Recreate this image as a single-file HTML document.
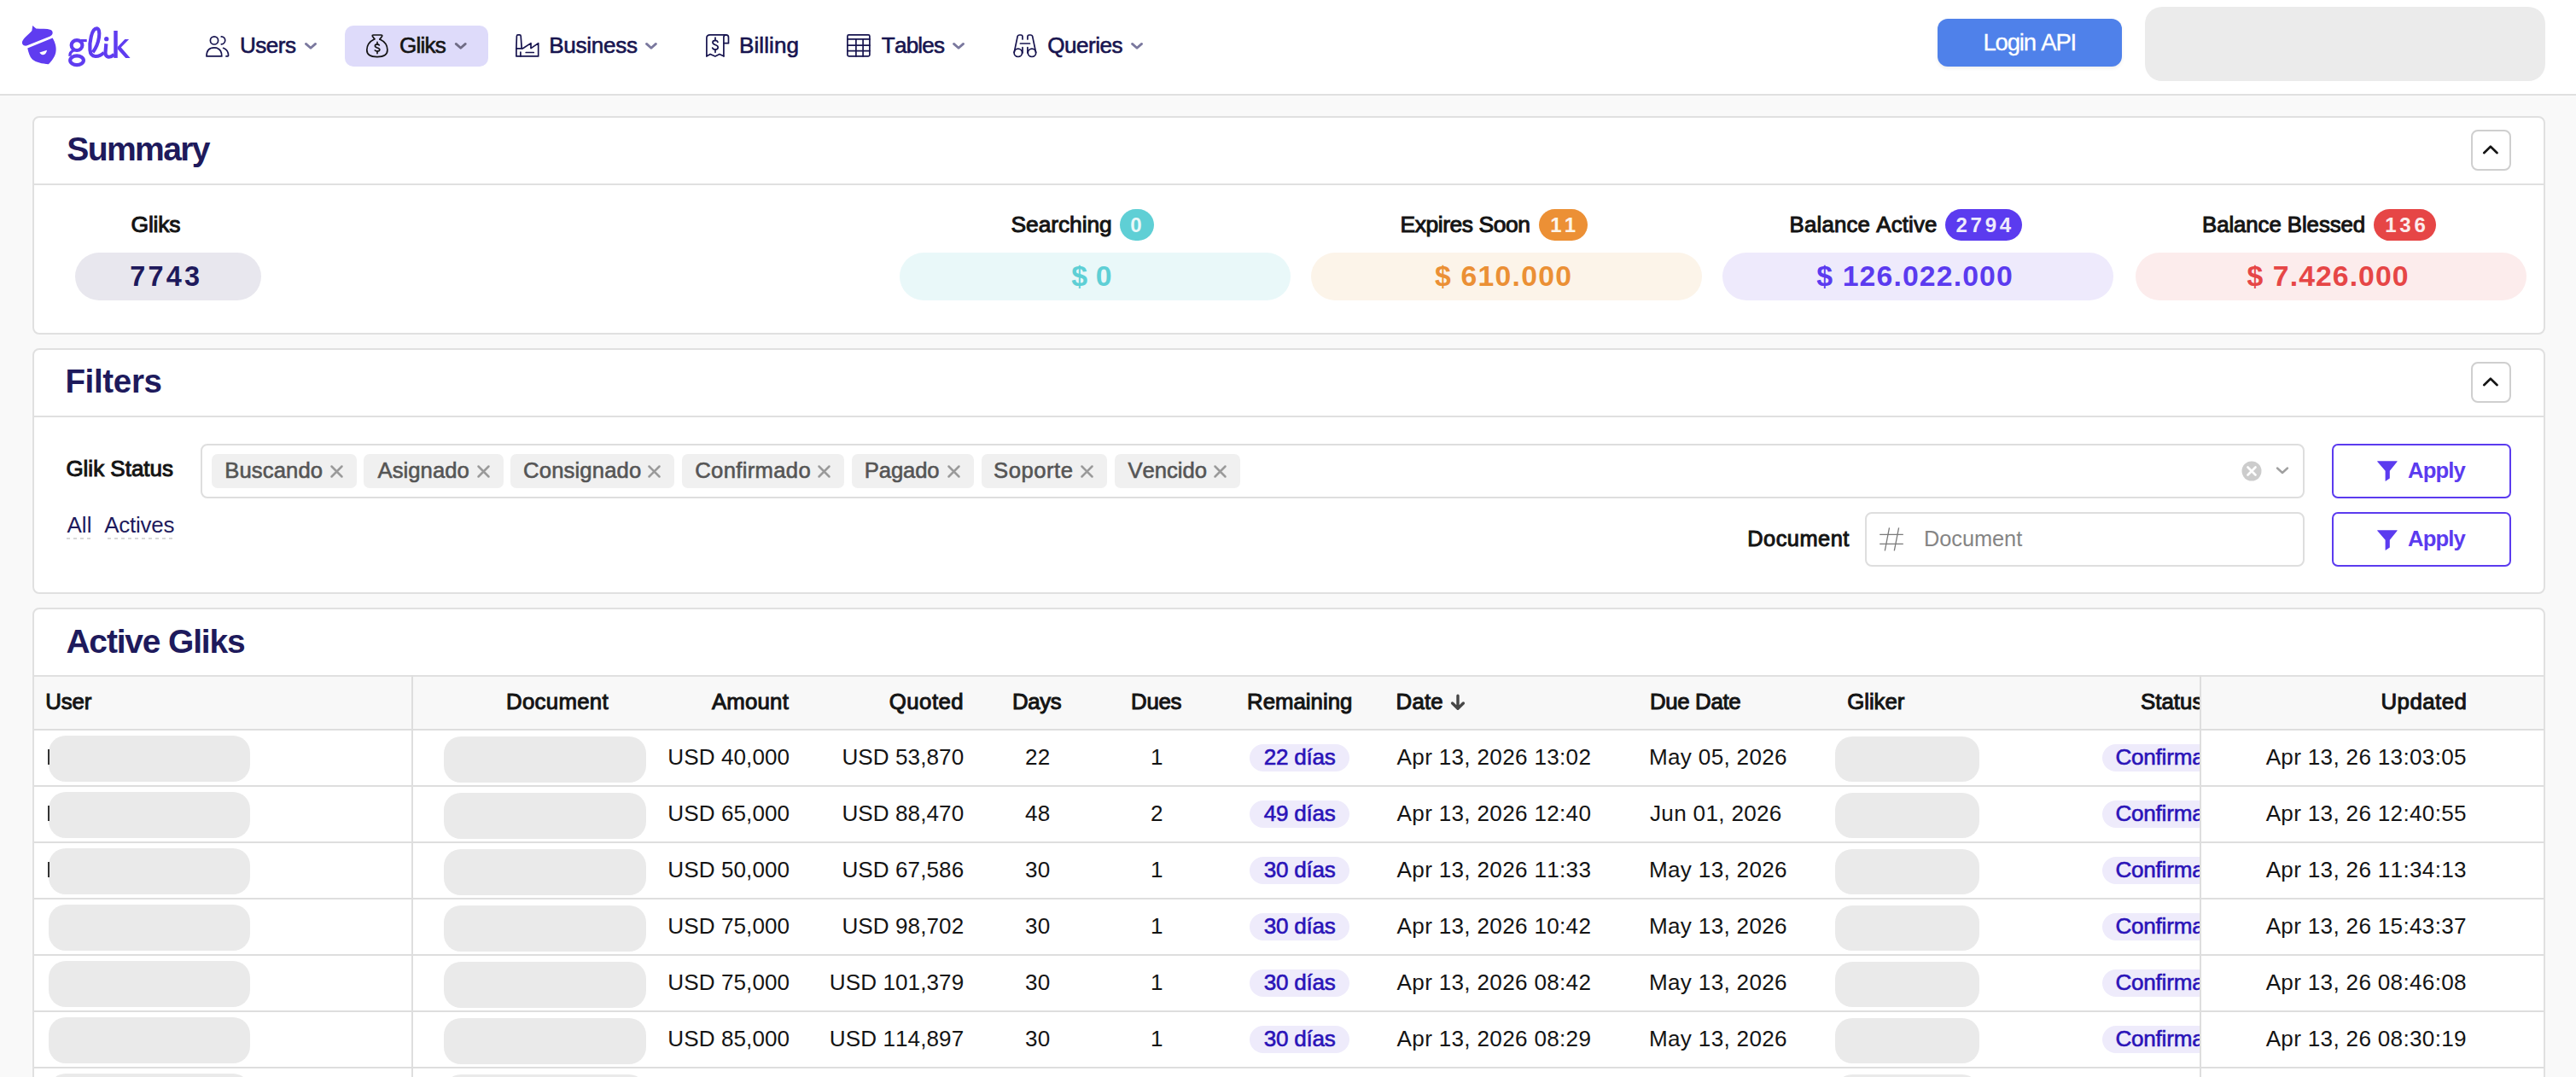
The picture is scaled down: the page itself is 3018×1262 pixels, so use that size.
<!DOCTYPE html>
<html><head><meta charset="utf-8"><title>Gliks</title>
<style>
html,body{margin:0;padding:0}
body{width:3018px;height:1262px;position:relative;overflow:hidden;background:#f9f9f9;font-family:"Liberation Sans",sans-serif}
.a{position:absolute;box-sizing:border-box}
.t{position:absolute;white-space:pre;font-family:"Liberation Sans",sans-serif}
svg{position:absolute;overflow:visible}
.ph{position:absolute;background:#eaeaea;border-radius:20px}
.hl{position:absolute;height:2px;background:#dedede}
.vl{position:absolute;width:2px;background:#dedede}
.dp{position:absolute;background:#eeebfb;border-radius:16px;height:32px}
</style></head><body>
<div class="a" style="left:0;top:0;width:3018px;height:112px;background:#fff;border-bottom:2px solid #e0e0e0"></div>
<div class="a" style="left:404px;top:30px;width:168px;height:48px;border-radius:10px;background:#dedbfa"></div>
<div class="a" style="left:2270px;top:22px;width:216px;height:56px;border-radius:12px;background:#4f81ea;box-shadow:0 2px 4px rgba(0,0,0,0.07)"></div>
<div class="a" style="left:2513px;top:8px;width:469px;height:87px;border-radius:20px;background:#ebebeb"></div>
<svg style="left:20px;top:20px" width="160" height="80" viewBox="0 0 2154 1077">
<g fill="#5f3cf0">
<path d="M245 135 L300 182 C380 186 470 180 532 202 C578 228 566 282 522 302 L152 452 C100 462 68 420 84 380 C110 320 190 268 234 214 Z"/>
<path d="M165 490 L560 330 C602 402 626 482 610 560 C592 640 542 700 495 745 C400 732 300 720 240 666 C200 622 180 560 165 490 Z"/>
<rect x="1000" y="350" width="100" height="42"/>
<circle cx="1410" cy="345" r="36"/>
<rect x="1525" y="215" width="60" height="430"/>
<path d="M1585 470 L1700 350 L1765 350 L1640 478 L1785 645 L1712 645 L1585 505 Z"/>
</g>
<path d="M355 560 L472 520 C465 560 445 590 410 595 C385 597 365 580 355 560 Z" fill="#fff"/>
<g fill="none" stroke="#5f3cf0" stroke-width="56">
<ellipse cx="943" cy="445" rx="86" ry="80"/>
<ellipse cx="943" cy="683" rx="106" ry="72"/>
<path d="M1195 555 C1300 420 1330 180 1255 180 C1175 180 1140 400 1150 520 C1160 650 1290 640 1370 560"/>
<path d="M1405 420 L1393 560 C1390 640 1470 650 1530 590"/>
</g>
<path d="M905 515 Q825 555 835 615" fill="none" stroke="#5f3cf0" stroke-width="46"/>
</svg>
<svg style="left:236px;top:34px" width="40" height="40" viewBox="0 0 40 40"><g fill="none" stroke="#17144f" stroke-width="1.7" stroke-linecap="round" stroke-linejoin="round"><circle cx="15" cy="13.4" r="4.6"/><path d="M6 31.9 H23.8 Q23.8 21.9 14.9 21.9 Q6 21.9 6 31.9 Z"/><path d="M23.3 8.9 A4.45 4.45 0 0 1 23.3 17.8"/><path d="M25.6 22.3 Q31.6 24.6 31.6 31 Q31.6 31.9 30.8 31.9 H29"/></g></svg>
<svg style="left:422px;top:34px" width="40" height="40" viewBox="0 0 40 40"><g fill="none" stroke="#141414" stroke-width="1.7" stroke-linecap="round" stroke-linejoin="round"><path d="M16.8 11.7 L14.4 8.4 Q13.9 7 15.5 7 H24.5 Q26.1 7 25.6 8.4 L23 12"/><path d="M16.8 11.7 C10 15 7.8 20 7.8 24.6 C7.8 30 12 32.7 19.9 32.7 C27.8 32.7 31.9 30 31.9 24.6 C31.9 20 29.5 15 23 12"/><path d="M22.3 18.9 Q21.5 17.8 20 17.8 Q17.4 17.8 17.4 19.8 Q17.4 21.3 20 22 Q22.8 22.7 22.8 24.3 Q22.8 26 20 26 Q18.3 26 17.3 25"/><path d="M20 15.4 V17.8 M20 26 V28.6"/></g></svg>
<svg style="left:598px;top:34px" width="40" height="40" viewBox="0 0 40 40"><g fill="none" stroke="#17144f" stroke-width="1.7" stroke-linecap="round" stroke-linejoin="round"><path d="M6.9 31.9 H32.7 V16.6 L24 22.6 V16.6 L14.5 22.8 H6.9 Z"/><path d="M6.9 22.8 L7.4 8.2 Q7.5 6.9 8.8 6.9 H10.8 Q12.1 6.9 12.2 8.2 L13.2 22.6"/><path d="M11.9 27 V31.9 M18.2 27.5 H27.3"/></g></svg>
<svg style="left:821px;top:34px" width="40" height="40" viewBox="0 0 40 40"><g fill="none" stroke="#17144f" stroke-width="1.7" stroke-linecap="round" stroke-linejoin="round"><path d="M6.9 31.8 V10.6 Q6.9 6.9 10.9 6.9 H29.6 Q32.5 6.9 32.5 9.8 V16.7 H26.9"/><path d="M26.9 31.8 V9.6 Q26.9 6.9 29.6 6.9"/><path d="M6.9 31.8 L11.2 29.4 L16.9 32 L21.9 29.4 L26.9 31.8"/><path d="M20 15.3 Q19.2 13.4 17 13.4 Q14 13.4 14 15.8 Q14 17.6 17 18.5 Q20.2 19.4 20.2 21.6 Q20.2 24.1 17 24.1 Q14.5 24.1 13.7 22.1"/><path d="M17 10.2 V13.4 M17 24.1 V27.3"/></g></svg>
<svg style="left:986px;top:34px" width="40" height="40" viewBox="0 0 40 40"><g fill="none" stroke="#17144f" stroke-width="1.7" stroke-linecap="round" stroke-linejoin="round"><rect x="6.9" y="6.9" width="26" height="25" rx="1.6"/><path d="M6.9 11.9 H32.9 M6.9 19.2 H32.9 M6.9 25.6 H32.9 M16.9 11.9 V31.9 M25.1 11.9 V31.9"/></g></svg>
<svg style="left:1180px;top:34px" width="40" height="40" viewBox="0 0 40 40"><g fill="none" stroke="#17144f" stroke-width="1.7" stroke-linecap="round" stroke-linejoin="round"><circle cx="12.8" cy="27.8" r="4.7"/><circle cx="29" cy="27.8" r="4.7"/><path d="M8.2 27.5 L12.2 8.3 Q12.8 7 14.3 7 H16 Q18 7 18 9.2 V11.9 M18 21.5 V28"/><path d="M33.6 27.5 L29.6 8.3 Q29 7 27.5 7 H25.8 Q23.9 7 23.9 9.2 V11.9 M23.9 21.5 V28"/><path d="M15.4 17 H26.5"/></g></svg>
<svg style="left:0;top:0" width="1" height="1"><path d="M358.4 51.400000000000006 L364.0 56.3 L369.6 51.400000000000006" fill="none" stroke="#7a789e" stroke-width="2.8" stroke-linecap="round" stroke-linejoin="round"/></svg>
<svg style="left:0;top:0" width="1" height="1"><path d="M534.2 51.400000000000006 L539.75 56.3 L545.3 51.400000000000006" fill="none" stroke="#6f6c85" stroke-width="2.8" stroke-linecap="round" stroke-linejoin="round"/></svg>
<svg style="left:0;top:0" width="1" height="1"><path d="M757.5 51.400000000000006 L762.95 56.3 L768.4 51.400000000000006" fill="none" stroke="#7a789e" stroke-width="2.8" stroke-linecap="round" stroke-linejoin="round"/></svg>
<svg style="left:0;top:0" width="1" height="1"><path d="M1117.5 51.400000000000006 L1123.05 56.3 L1128.6 51.400000000000006" fill="none" stroke="#7a789e" stroke-width="2.8" stroke-linecap="round" stroke-linejoin="round"/></svg>
<svg style="left:0;top:0" width="1" height="1"><path d="M1326.5 51.400000000000006 L1332.05 56.3 L1337.6 51.400000000000006" fill="none" stroke="#7a789e" stroke-width="2.8" stroke-linecap="round" stroke-linejoin="round"/></svg>
<div class="a" style="left:38px;top:136px;width:2944px;height:256px;background:#fff;border:2px solid #e0e0e0;border-radius:8px"></div>
<div class="hl" style="left:40px;top:215px;width:2940px;background:#e0e0e0"></div>
<div class="a" style="left:2894.5px;top:152px;width:47px;height:47.5px;border:2px solid #cfcfcf;border-radius:8px;background:#fff"></div>
<svg style="left:2895px;top:152px" width="46" height="47" viewBox="0 0 46 47"><path d="M15.2 27.2 L22.9 19.7 L30.6 27.2" fill="none" stroke="#141414" stroke-width="2.6" stroke-linecap="round" stroke-linejoin="round"/></svg>
<div class="a" style="left:38px;top:408px;width:2944px;height:288px;background:#fff;border:2px solid #e0e0e0;border-radius:8px"></div>
<div class="hl" style="left:40px;top:487px;width:2940px;background:#e0e0e0"></div>
<div class="a" style="left:2894.5px;top:424px;width:47px;height:47.5px;border:2px solid #cfcfcf;border-radius:8px;background:#fff"></div>
<svg style="left:2895px;top:424px" width="46" height="47" viewBox="0 0 46 47"><path d="M15.2 27.2 L22.9 19.7 L30.6 27.2" fill="none" stroke="#141414" stroke-width="2.6" stroke-linecap="round" stroke-linejoin="round"/></svg>
<div class="a" style="left:38px;top:712px;width:2944px;height:700px;background:#fff;border:2px solid #e0e0e0;border-radius:8px"></div>
<div class="hl" style="left:40px;top:791px;width:2940px;background:#e0e0e0"></div>
<div class="a" style="left:88px;top:296px;width:218px;height:56px;border-radius:28px;background:#e8e7ee"></div>
<div class="a" style="left:1054px;top:296px;width:458px;height:56px;border-radius:28px;background:#e9f8f9"></div>
<div class="a" style="left:1536px;top:296px;width:458px;height:56px;border-radius:28px;background:#fcf4e9"></div>
<div class="a" style="left:2018px;top:296px;width:458px;height:56px;border-radius:28px;background:#eeeafc"></div>
<div class="a" style="left:2502px;top:296px;width:458px;height:56px;border-radius:28px;background:#fcecec"></div>
<div class="a" style="left:1311.7px;top:245px;width:40.8px;height:37px;border-radius:18.5px;background:#5fcfd5"></div>
<div class="a" style="left:1802.8px;top:245px;width:57.1px;height:37px;border-radius:18.5px;background:#ec9035"></div>
<div class="a" style="left:2279px;top:245px;width:89.8px;height:37px;border-radius:18.5px;background:#5b3bef"></div>
<div class="a" style="left:2781.4px;top:245px;width:72.4px;height:37px;border-radius:18.5px;background:#e64646"></div>
<div class="a" style="left:235px;top:520px;width:2464.5px;height:64px;border:2px solid #dedede;border-radius:8px;background:#fff"></div>
<div class="a" style="left:248.1px;top:532px;width:169.7px;height:40px;border-radius:7px;background:#f0f0f0"></div>
<svg style="left:386.8px;top:545px" width="15" height="15" viewBox="0 0 15 15"><path d="M1.5 1.5 L13.5 13.5 M13.5 1.5 L1.5 13.5" stroke="#9a9a9a" stroke-width="2.5" stroke-linecap="round"/></svg>
<div class="a" style="left:426.1px;top:532px;width:163.9px;height:40px;border-radius:7px;background:#f0f0f0"></div>
<svg style="left:559.0px;top:545px" width="15" height="15" viewBox="0 0 15 15"><path d="M1.5 1.5 L13.5 13.5 M13.5 1.5 L1.5 13.5" stroke="#9a9a9a" stroke-width="2.5" stroke-linecap="round"/></svg>
<div class="a" style="left:598.2px;top:532px;width:192.2px;height:40px;border-radius:7px;background:#f0f0f0"></div>
<svg style="left:759.4px;top:545px" width="15" height="15" viewBox="0 0 15 15"><path d="M1.5 1.5 L13.5 13.5 M13.5 1.5 L1.5 13.5" stroke="#9a9a9a" stroke-width="2.5" stroke-linecap="round"/></svg>
<div class="a" style="left:798.9px;top:532px;width:190.2px;height:40px;border-radius:7px;background:#f0f0f0"></div>
<svg style="left:958.1px;top:545px" width="15" height="15" viewBox="0 0 15 15"><path d="M1.5 1.5 L13.5 13.5 M13.5 1.5 L1.5 13.5" stroke="#9a9a9a" stroke-width="2.5" stroke-linecap="round"/></svg>
<div class="a" style="left:998px;top:532px;width:142.5px;height:40px;border-radius:7px;background:#f0f0f0"></div>
<svg style="left:1109.5px;top:545px" width="15" height="15" viewBox="0 0 15 15"><path d="M1.5 1.5 L13.5 13.5 M13.5 1.5 L1.5 13.5" stroke="#9a9a9a" stroke-width="2.5" stroke-linecap="round"/></svg>
<div class="a" style="left:1149.5px;top:532px;width:147.5px;height:40px;border-radius:7px;background:#f0f0f0"></div>
<svg style="left:1266.0px;top:545px" width="15" height="15" viewBox="0 0 15 15"><path d="M1.5 1.5 L13.5 13.5 M13.5 1.5 L1.5 13.5" stroke="#9a9a9a" stroke-width="2.5" stroke-linecap="round"/></svg>
<div class="a" style="left:1305.5px;top:532px;width:147.9px;height:40px;border-radius:7px;background:#f0f0f0"></div>
<svg style="left:1422.4px;top:545px" width="15" height="15" viewBox="0 0 15 15"><path d="M1.5 1.5 L13.5 13.5 M13.5 1.5 L1.5 13.5" stroke="#9a9a9a" stroke-width="2.5" stroke-linecap="round"/></svg>
<svg style="left:2626px;top:540px" width="24" height="24" viewBox="0 0 24 24"><circle cx="12" cy="12" r="11.5" fill="#cccccc"/><path d="M7.5 7.5 L16.5 16.5 M16.5 7.5 L7.5 16.5" stroke="#fff" stroke-width="2.6" stroke-linecap="round"/></svg>
<svg style="left:2666px;top:546px" width="16" height="11" viewBox="0 0 16 11"><path d="M2 2.5 L8 8 L14 2.5" fill="none" stroke="#a0a0a0" stroke-width="2.4" stroke-linecap="round" stroke-linejoin="round"/></svg>
<div class="a" style="left:2731.8px;top:520px;width:210.4px;height:64px;border:2.4px solid #5b3bef;border-radius:7px;background:#fff"></div>
<svg style="left:2785px;top:540.2px" width="25" height="25" viewBox="0 0 25 25"><path d="M0.6 0.3 H23.2 Q24 0.3 23.5 1 L14.8 11.8 V20.6 L9.6 24 V11.8 L0.3 1 Q-0.2 0.3 0.6 0.3 Z" fill="#5b3bef"/></svg>
<div class="a" style="left:2731.8px;top:600.3px;width:210.4px;height:64px;border:2.4px solid #5b3bef;border-radius:7px;background:#fff"></div>
<svg style="left:2785px;top:620.5px" width="25" height="25" viewBox="0 0 25 25"><path d="M0.6 0.3 H23.2 Q24 0.3 23.5 1 L14.8 11.8 V20.6 L9.6 24 V11.8 L0.3 1 Q-0.2 0.3 0.6 0.3 Z" fill="#5b3bef"/></svg>
<div class="a" style="left:2184.6px;top:600.3px;width:515px;height:64px;border:2px solid #dedede;border-radius:8px;background:#fff"></div>
<svg style="left:2200px;top:617px" width="32" height="30" viewBox="0 0 32 30"><path d="M13.5 1.4 L8.3 28.3 M24.6 1.4 L19.3 28.3 M2.2 9.4 H29.8 M2.2 20.4 H29.8" stroke="#7a7a7a" stroke-width="1.3" fill="none"/></svg>
<div class="a" style="left:78px;top:630px;width:28px;height:2px;background:repeating-linear-gradient(90deg,#d8d8d8 0 4px,transparent 4px 8px)"></div>
<div class="a" style="left:126px;top:630px;width:76px;height:2px;background:repeating-linear-gradient(90deg,#d8d8d8 0 4px,transparent 4px 8px)"></div>
<div class="a" style="left:40px;top:793px;width:2940px;height:61px;background:#f8f8f8"></div>
<div class="hl" style="left:40px;top:854px;width:2940px"></div>
<div class="hl" style="left:40px;top:920px;width:2940px"></div>
<div class="hl" style="left:40px;top:986px;width:2940px"></div>
<div class="hl" style="left:40px;top:1052px;width:2940px"></div>
<div class="hl" style="left:40px;top:1118px;width:2940px"></div>
<div class="hl" style="left:40px;top:1184px;width:2940px"></div>
<div class="hl" style="left:40px;top:1250px;width:2940px"></div>
<div class="vl" style="left:482px;top:791px;height:480px"></div>
<div class="vl" style="left:2577px;top:791px;height:480px"></div>
<svg style="left:1698px;top:813px" width="20" height="20" viewBox="0 0 20 20"><path d="M10 2.2 V16.8 M3.6 11 L10 17.2 L16.4 11" fill="none" stroke="#474747" stroke-width="3.4" stroke-linecap="round" stroke-linejoin="round"/></svg>
<div class="ph" style="left:57px;top:862px;width:236px;height:54px"></div>
<div class="ph" style="left:520px;top:863px;width:237px;height:54px"></div>
<div class="ph" style="left:2150px;top:863px;width:169px;height:53px"></div>
<div class="dp" style="left:1464px;top:872px;width:117px"></div>
<div class="a" style="left:2440px;top:860px;width:137px;height:56px;overflow:hidden"><div class="dp" style="left:23.2px;top:12px;width:160px"></div><div class="t" style="left:38.40px;top:14.00px;color:#2a13b8;font-weight:400;font-size:26.09px;line-height:1;font-kerning:none;-webkit-text-stroke:0.6px currentColor;letter-spacing:-0.217px">Confirmado</div></div>
<div class="ph" style="left:57px;top:928px;width:236px;height:54px"></div>
<div class="ph" style="left:520px;top:929px;width:237px;height:54px"></div>
<div class="ph" style="left:2150px;top:929px;width:169px;height:53px"></div>
<div class="dp" style="left:1464px;top:938px;width:117px"></div>
<div class="a" style="left:2440px;top:926px;width:137px;height:56px;overflow:hidden"><div class="dp" style="left:23.2px;top:12px;width:160px"></div><div class="t" style="left:38.40px;top:14.00px;color:#2a13b8;font-weight:400;font-size:26.09px;line-height:1;font-kerning:none;-webkit-text-stroke:0.6px currentColor;letter-spacing:-0.217px">Confirmado</div></div>
<div class="ph" style="left:57px;top:994px;width:236px;height:54px"></div>
<div class="ph" style="left:520px;top:995px;width:237px;height:54px"></div>
<div class="ph" style="left:2150px;top:995px;width:169px;height:53px"></div>
<div class="dp" style="left:1464px;top:1004px;width:117px"></div>
<div class="a" style="left:2440px;top:992px;width:137px;height:56px;overflow:hidden"><div class="dp" style="left:23.2px;top:12px;width:160px"></div><div class="t" style="left:38.40px;top:14.00px;color:#2a13b8;font-weight:400;font-size:26.09px;line-height:1;font-kerning:none;-webkit-text-stroke:0.6px currentColor;letter-spacing:-0.217px">Confirmado</div></div>
<div class="ph" style="left:57px;top:1060px;width:236px;height:54px"></div>
<div class="ph" style="left:520px;top:1061px;width:237px;height:54px"></div>
<div class="ph" style="left:2150px;top:1061px;width:169px;height:53px"></div>
<div class="dp" style="left:1464px;top:1070px;width:117px"></div>
<div class="a" style="left:2440px;top:1058px;width:137px;height:56px;overflow:hidden"><div class="dp" style="left:23.2px;top:12px;width:160px"></div><div class="t" style="left:38.40px;top:14.00px;color:#2a13b8;font-weight:400;font-size:26.09px;line-height:1;font-kerning:none;-webkit-text-stroke:0.6px currentColor;letter-spacing:-0.217px">Confirmado</div></div>
<div class="ph" style="left:57px;top:1126px;width:236px;height:54px"></div>
<div class="ph" style="left:520px;top:1127px;width:237px;height:54px"></div>
<div class="ph" style="left:2150px;top:1127px;width:169px;height:53px"></div>
<div class="dp" style="left:1464px;top:1136px;width:117px"></div>
<div class="a" style="left:2440px;top:1124px;width:137px;height:56px;overflow:hidden"><div class="dp" style="left:23.2px;top:12px;width:160px"></div><div class="t" style="left:38.40px;top:14.00px;color:#2a13b8;font-weight:400;font-size:26.09px;line-height:1;font-kerning:none;-webkit-text-stroke:0.6px currentColor;letter-spacing:-0.217px">Confirmado</div></div>
<div class="ph" style="left:57px;top:1192px;width:236px;height:54px"></div>
<div class="ph" style="left:520px;top:1193px;width:237px;height:54px"></div>
<div class="ph" style="left:2150px;top:1193px;width:169px;height:53px"></div>
<div class="dp" style="left:1464px;top:1202px;width:117px"></div>
<div class="a" style="left:2440px;top:1190px;width:137px;height:56px;overflow:hidden"><div class="dp" style="left:23.2px;top:12px;width:160px"></div><div class="t" style="left:38.40px;top:14.00px;color:#2a13b8;font-weight:400;font-size:26.09px;line-height:1;font-kerning:none;-webkit-text-stroke:0.6px currentColor;letter-spacing:-0.217px">Confirmado</div></div>
<div class="ph" style="left:57px;top:1258px;width:236px;height:54px"></div>
<div class="ph" style="left:520px;top:1259px;width:237px;height:54px"></div>
<div class="ph" style="left:2150px;top:1259px;width:169px;height:53px"></div>
<div class="a" style="left:55.5px;top:878px;width:2.2px;height:18px;background:#333"></div>
<div class="a" style="left:55.5px;top:944px;width:2.2px;height:18px;background:#333"></div>
<div class="a" style="left:55.5px;top:1010px;width:2.2px;height:18px;background:#333"></div>
<div class="a" style="left:2440px;top:800px;width:137px;height:50px;overflow:hidden"><div class="t" style="left:68.00px;top:10.00px;color:#141414;font-weight:400;font-size:25.80px;line-height:1;font-kerning:none;-webkit-text-stroke:1.0px currentColor;letter-spacing:0.043px">Status</div></div>
<div class=t style="left:280.90px;top:40.00px;color:#17144f;font-weight:400;font-size:26.09px;line-height:1;font-kerning:none;-webkit-text-stroke:0.6px currentColor;letter-spacing:-0.500px">Users</div>
<div class=t style="left:468.00px;top:40.00px;color:#141414;font-weight:400;font-size:26.09px;line-height:1;font-kerning:none;-webkit-text-stroke:0.6px currentColor;letter-spacing:-0.800px">Gliks</div>
<div class=t style="left:643.20px;top:40.00px;color:#17144f;font-weight:400;font-size:26.09px;line-height:1;font-kerning:none;-webkit-text-stroke:0.6px currentColor;letter-spacing:-0.286px">Business</div>
<div class=t style="left:866.00px;top:40.00px;color:#17144f;font-weight:400;font-size:26.09px;line-height:1;font-kerning:none;-webkit-text-stroke:0.6px currentColor;letter-spacing:0.083px">Billing</div>
<div class=t style="left:1032.80px;top:40.00px;color:#17144f;font-weight:400;font-size:26.09px;line-height:1;font-kerning:none;-webkit-text-stroke:0.6px currentColor;letter-spacing:-0.800px">Tables</div>
<div class=t style="left:1227.20px;top:40.00px;color:#17144f;font-weight:400;font-size:26.09px;line-height:1;font-kerning:none;-webkit-text-stroke:0.6px currentColor;letter-spacing:-0.483px">Queries</div>
<div class=t style="left:2323.40px;top:36.00px;color:#fff;font-weight:400;font-size:27.54px;line-height:1;font-kerning:none;-webkit-text-stroke:0.3px currentColor;letter-spacing:-1.188px">Login API</div>
<div class=t style="left:78.20px;top:155.00px;color:#1e1a5c;font-weight:700;font-size:39.13px;line-height:1;font-kerning:none;letter-spacing:-1.650px">Summary</div>
<div class=t style="left:153.50px;top:250.00px;color:#141414;font-weight:400;font-size:26.52px;line-height:1;font-kerning:none;-webkit-text-stroke:1.0px currentColor;letter-spacing:-0.225px">Gliks</div>
<div class=t style="left:152.30px;top:308.00px;color:#1e1a5c;font-weight:700;font-size:32.46px;line-height:1;font-kerning:none;letter-spacing:3.200px">7743</div>
<div class=t style="left:1184.60px;top:250.00px;color:#141414;font-weight:400;font-size:26.38px;line-height:1;font-kerning:none;-webkit-text-stroke:1.0px currentColor;letter-spacing:-0.075px">Searching</div>
<div class=t style="left:1255.20px;top:307.00px;color:#5ecfd5;font-weight:700;font-size:33.77px;line-height:1;font-kerning:none;letter-spacing:0.200px">$ 0</div>
<div class=t style="left:1640.50px;top:250.00px;color:#141414;font-weight:400;font-size:26.38px;line-height:1;font-kerning:none;-webkit-text-stroke:1.0px currentColor;letter-spacing:-0.409px">Expires Soon</div>
<div class=t style="left:1681.00px;top:307.00px;color:#eb9035;font-weight:700;font-size:33.77px;line-height:1;font-kerning:none;letter-spacing:1.213px">$ 610.000</div>
<div class=t style="left:2096.60px;top:251.00px;color:#141414;font-weight:400;font-size:25.80px;line-height:1;font-kerning:none;-webkit-text-stroke:1.0px currentColor;letter-spacing:0.169px">Balance Active</div>
<div class=t style="left:2128.20px;top:307.00px;color:#5b3bef;font-weight:700;font-size:33.77px;line-height:1;font-kerning:none;letter-spacing:1.142px">$ 126.022.000</div>
<div class=t style="left:2580.00px;top:251.00px;color:#141414;font-weight:400;font-size:25.80px;line-height:1;font-kerning:none;-webkit-text-stroke:1.0px currentColor;letter-spacing:-0.071px">Balance Blessed</div>
<div class=t style="left:2632.60px;top:307.00px;color:#e64646;font-weight:700;font-size:33.77px;line-height:1;font-kerning:none;letter-spacing:1.060px">$ 7.426.000</div>
<div class=t style="left:1324.30px;top:252.00px;color:#e9f8f9;font-weight:700;font-size:24.06px;line-height:1;font-kerning:none;letter-spacing:0.000px">0</div>
<div class=t style="left:1816.20px;top:252.00px;color:#fcf4e9;font-weight:700;font-size:24.06px;line-height:1;font-kerning:none;letter-spacing:3.300px">11</div>
<div class=t style="left:2291.50px;top:252.00px;color:#eeeafc;font-weight:700;font-size:24.06px;line-height:1;font-kerning:none;letter-spacing:3.733px">2794</div>
<div class=t style="left:2794.30px;top:252.00px;color:#fcecec;font-weight:700;font-size:24.06px;line-height:1;font-kerning:none;letter-spacing:3.700px">136</div>
<div class=t style="left:76.40px;top:428.00px;color:#1e1a5c;font-weight:700;font-size:38.55px;line-height:1;font-kerning:none;letter-spacing:-0.350px">Filters</div>
<div class=t style="left:77.40px;top:537.00px;color:#141414;font-weight:400;font-size:25.94px;line-height:1;font-kerning:none;-webkit-text-stroke:1.0px currentColor;letter-spacing:0.020px">Glik Status</div>
<div class=t style="left:263.20px;top:539.00px;color:#555555;font-weight:400;font-size:25.65px;line-height:1;font-kerning:none;-webkit-text-stroke:0.6px currentColor;letter-spacing:0.114px">Buscando</div>
<div class=t style="left:442.60px;top:539.00px;color:#555555;font-weight:400;font-size:25.65px;line-height:1;font-kerning:none;-webkit-text-stroke:0.6px currentColor;letter-spacing:0.029px">Asignado</div>
<div class=t style="left:613.10px;top:539.00px;color:#555555;font-weight:400;font-size:25.65px;line-height:1;font-kerning:none;-webkit-text-stroke:0.6px currentColor;letter-spacing:0.144px">Consignado</div>
<div class=t style="left:814.20px;top:539.00px;color:#555555;font-weight:400;font-size:25.65px;line-height:1;font-kerning:none;-webkit-text-stroke:0.6px currentColor;letter-spacing:0.333px">Confirmado</div>
<div class=t style="left:1012.80px;top:539.00px;color:#555555;font-weight:400;font-size:25.65px;line-height:1;font-kerning:none;-webkit-text-stroke:0.6px currentColor;letter-spacing:-0.120px">Pagado</div>
<div class=t style="left:1164.00px;top:539.00px;color:#555555;font-weight:400;font-size:25.65px;line-height:1;font-kerning:none;-webkit-text-stroke:0.6px currentColor;letter-spacing:0.533px">Soporte</div>
<div class=t style="left:1321.40px;top:539.00px;color:#555555;font-weight:400;font-size:25.65px;line-height:1;font-kerning:none;-webkit-text-stroke:0.6px currentColor;letter-spacing:0.000px">Vencido</div>
<div class=t style="left:78.40px;top:603.00px;color:#1e1a5c;font-weight:400;font-size:25.94px;line-height:1;font-kerning:none;letter-spacing:0.100px">All</div>
<div class=t style="left:122.30px;top:603.00px;color:#1e1a5c;font-weight:400;font-size:25.94px;line-height:1;font-kerning:none;letter-spacing:-0.250px">Actives</div>
<div class=t style="left:2821.00px;top:539.00px;color:#5b3bef;font-weight:700;font-size:25.65px;line-height:1;font-kerning:none;letter-spacing:-0.875px">Apply</div>
<div class=t style="left:2821.00px;top:619.00px;color:#5b3bef;font-weight:700;font-size:25.65px;line-height:1;font-kerning:none;letter-spacing:-0.875px">Apply</div>
<div class=t style="left:2047.20px;top:619.00px;color:#141414;font-weight:400;font-size:25.36px;line-height:1;font-kerning:none;-webkit-text-stroke:1.0px currentColor;letter-spacing:0.514px">Document</div>
<div class=t style="left:2254.00px;top:619.00px;color:#858585;font-weight:400;font-size:25.36px;line-height:1;font-kerning:none;letter-spacing:-0.057px">Document</div>
<div class=t style="left:77.40px;top:732.00px;color:#1e1a5c;font-weight:700;font-size:38.99px;line-height:1;font-kerning:none;letter-spacing:-1.173px">Active Gliks</div>
<div class=t style="left:53.30px;top:810.00px;color:#141414;font-weight:400;font-size:25.80px;line-height:1;font-kerning:none;-webkit-text-stroke:1.0px currentColor;letter-spacing:-0.133px">User</div>
<div class=t style="left:593.00px;top:810.00px;color:#141414;font-weight:400;font-size:25.80px;line-height:1;font-kerning:none;-webkit-text-stroke:1.0px currentColor;letter-spacing:0.300px">Document</div>
<div class=t style="left:833.90px;top:810.00px;color:#141414;font-weight:400;font-size:25.80px;line-height:1;font-kerning:none;-webkit-text-stroke:1.0px currentColor;letter-spacing:0.200px">Amount</div>
<div class=t style="left:1041.70px;top:810.00px;color:#141414;font-weight:400;font-size:25.80px;line-height:1;font-kerning:none;-webkit-text-stroke:1.0px currentColor;letter-spacing:0.480px">Quoted</div>
<div class=t style="left:1186.10px;top:810.00px;color:#141414;font-weight:400;font-size:25.80px;line-height:1;font-kerning:none;-webkit-text-stroke:1.0px currentColor;letter-spacing:-0.433px">Days</div>
<div class=t style="left:1325.00px;top:810.00px;color:#141414;font-weight:400;font-size:25.80px;line-height:1;font-kerning:none;-webkit-text-stroke:1.0px currentColor;letter-spacing:-0.233px">Dues</div>
<div class=t style="left:1461.00px;top:810.00px;color:#141414;font-weight:400;font-size:25.80px;line-height:1;font-kerning:none;-webkit-text-stroke:1.0px currentColor;letter-spacing:0.012px">Remaining</div>
<div class=t style="left:1635.60px;top:810.00px;color:#141414;font-weight:400;font-size:25.80px;line-height:1;font-kerning:none;-webkit-text-stroke:1.0px currentColor;letter-spacing:0.200px">Date</div>
<div class=t style="left:1933.00px;top:810.00px;color:#141414;font-weight:400;font-size:25.80px;line-height:1;font-kerning:none;-webkit-text-stroke:1.0px currentColor;letter-spacing:-0.343px">Due Date</div>
<div class=t style="left:2164.20px;top:810.00px;color:#141414;font-weight:400;font-size:25.80px;line-height:1;font-kerning:none;-webkit-text-stroke:1.0px currentColor;letter-spacing:-0.040px">Gliker</div>
<div class=t style="left:2789.50px;top:810.00px;color:#141414;font-weight:400;font-size:25.80px;line-height:1;font-kerning:none;-webkit-text-stroke:1.0px currentColor;letter-spacing:0.467px">Updated</div>
<div class=t style="left:782.30px;top:874.00px;color:#141414;font-weight:400;font-size:26.09px;line-height:1;font-kerning:none;letter-spacing:0.078px">USD 40,000</div>
<div class=t style="left:986.40px;top:874.00px;color:#141414;font-weight:400;font-size:26.09px;line-height:1;font-kerning:none;letter-spacing:0.078px">USD 53,870</div>
<div class=t style="left:1201.06px;top:874.00px;color:#141414;font-weight:400;font-size:26.09px;line-height:1;font-kerning:none;letter-spacing:0.078px">22</div>
<div class=t style="left:1348.10px;top:874.00px;color:#141414;font-weight:400;font-size:26.09px;line-height:1;font-kerning:none;letter-spacing:0.078px">1</div>
<div class=t style="left:1480.65px;top:874.00px;color:#2a13b8;font-weight:400;font-size:26.09px;line-height:1;font-kerning:none;-webkit-text-stroke:0.6px currentColor;letter-spacing:-0.217px">22 días</div>
<div class=t style="left:1636.60px;top:874.00px;color:#141414;font-weight:400;font-size:26.09px;line-height:1;font-kerning:none;letter-spacing:0.324px">Apr 13, 2026 13:02</div>
<div class=t style="left:1932.00px;top:874.00px;color:#141414;font-weight:400;font-size:26.09px;line-height:1;font-kerning:none;letter-spacing:0.324px">May 05, 2026</div>
<div class=t style="left:2654.67px;top:874.00px;color:#141414;font-weight:400;font-size:26.09px;line-height:1;font-kerning:none;letter-spacing:0.324px">Apr 13, 26 13:03:05</div>
<div class=t style="left:782.30px;top:940.00px;color:#141414;font-weight:400;font-size:26.09px;line-height:1;font-kerning:none;letter-spacing:0.078px">USD 65,000</div>
<div class=t style="left:986.40px;top:940.00px;color:#141414;font-weight:400;font-size:26.09px;line-height:1;font-kerning:none;letter-spacing:0.078px">USD 88,470</div>
<div class=t style="left:1201.06px;top:940.00px;color:#141414;font-weight:400;font-size:26.09px;line-height:1;font-kerning:none;letter-spacing:0.078px">48</div>
<div class=t style="left:1348.10px;top:940.00px;color:#141414;font-weight:400;font-size:26.09px;line-height:1;font-kerning:none;letter-spacing:0.078px">2</div>
<div class=t style="left:1480.65px;top:940.00px;color:#2a13b8;font-weight:400;font-size:26.09px;line-height:1;font-kerning:none;-webkit-text-stroke:0.6px currentColor;letter-spacing:-0.217px">49 días</div>
<div class=t style="left:1636.60px;top:940.00px;color:#141414;font-weight:400;font-size:26.09px;line-height:1;font-kerning:none;letter-spacing:0.324px">Apr 13, 2026 12:40</div>
<div class=t style="left:1933.00px;top:940.00px;color:#141414;font-weight:400;font-size:26.09px;line-height:1;font-kerning:none;letter-spacing:0.324px">Jun 01, 2026</div>
<div class=t style="left:2654.67px;top:940.00px;color:#141414;font-weight:400;font-size:26.09px;line-height:1;font-kerning:none;letter-spacing:0.324px">Apr 13, 26 12:40:55</div>
<div class=t style="left:782.30px;top:1006.00px;color:#141414;font-weight:400;font-size:26.09px;line-height:1;font-kerning:none;letter-spacing:0.078px">USD 50,000</div>
<div class=t style="left:986.40px;top:1006.00px;color:#141414;font-weight:400;font-size:26.09px;line-height:1;font-kerning:none;letter-spacing:0.078px">USD 67,586</div>
<div class=t style="left:1201.06px;top:1006.00px;color:#141414;font-weight:400;font-size:26.09px;line-height:1;font-kerning:none;letter-spacing:0.078px">30</div>
<div class=t style="left:1348.10px;top:1006.00px;color:#141414;font-weight:400;font-size:26.09px;line-height:1;font-kerning:none;letter-spacing:0.078px">1</div>
<div class=t style="left:1480.65px;top:1006.00px;color:#2a13b8;font-weight:400;font-size:26.09px;line-height:1;font-kerning:none;-webkit-text-stroke:0.6px currentColor;letter-spacing:-0.217px">30 días</div>
<div class=t style="left:1636.60px;top:1006.00px;color:#141414;font-weight:400;font-size:26.09px;line-height:1;font-kerning:none;letter-spacing:0.324px">Apr 13, 2026 11:33</div>
<div class=t style="left:1932.00px;top:1006.00px;color:#141414;font-weight:400;font-size:26.09px;line-height:1;font-kerning:none;letter-spacing:0.324px">May 13, 2026</div>
<div class=t style="left:2654.67px;top:1006.00px;color:#141414;font-weight:400;font-size:26.09px;line-height:1;font-kerning:none;letter-spacing:0.324px">Apr 13, 26 11:34:13</div>
<div class=t style="left:782.30px;top:1072.00px;color:#141414;font-weight:400;font-size:26.09px;line-height:1;font-kerning:none;letter-spacing:0.078px">USD 75,000</div>
<div class=t style="left:986.40px;top:1072.00px;color:#141414;font-weight:400;font-size:26.09px;line-height:1;font-kerning:none;letter-spacing:0.078px">USD 98,702</div>
<div class=t style="left:1201.06px;top:1072.00px;color:#141414;font-weight:400;font-size:26.09px;line-height:1;font-kerning:none;letter-spacing:0.078px">30</div>
<div class=t style="left:1348.10px;top:1072.00px;color:#141414;font-weight:400;font-size:26.09px;line-height:1;font-kerning:none;letter-spacing:0.078px">1</div>
<div class=t style="left:1480.65px;top:1072.00px;color:#2a13b8;font-weight:400;font-size:26.09px;line-height:1;font-kerning:none;-webkit-text-stroke:0.6px currentColor;letter-spacing:-0.217px">30 días</div>
<div class=t style="left:1636.60px;top:1072.00px;color:#141414;font-weight:400;font-size:26.09px;line-height:1;font-kerning:none;letter-spacing:0.324px">Apr 13, 2026 10:42</div>
<div class=t style="left:1932.00px;top:1072.00px;color:#141414;font-weight:400;font-size:26.09px;line-height:1;font-kerning:none;letter-spacing:0.324px">May 13, 2026</div>
<div class=t style="left:2654.67px;top:1072.00px;color:#141414;font-weight:400;font-size:26.09px;line-height:1;font-kerning:none;letter-spacing:0.324px">Apr 13, 26 15:43:37</div>
<div class=t style="left:782.30px;top:1138.00px;color:#141414;font-weight:400;font-size:26.09px;line-height:1;font-kerning:none;letter-spacing:0.078px">USD 75,000</div>
<div class=t style="left:971.82px;top:1138.00px;color:#141414;font-weight:400;font-size:26.09px;line-height:1;font-kerning:none;letter-spacing:0.078px">USD 101,379</div>
<div class=t style="left:1201.06px;top:1138.00px;color:#141414;font-weight:400;font-size:26.09px;line-height:1;font-kerning:none;letter-spacing:0.078px">30</div>
<div class=t style="left:1348.10px;top:1138.00px;color:#141414;font-weight:400;font-size:26.09px;line-height:1;font-kerning:none;letter-spacing:0.078px">1</div>
<div class=t style="left:1480.65px;top:1138.00px;color:#2a13b8;font-weight:400;font-size:26.09px;line-height:1;font-kerning:none;-webkit-text-stroke:0.6px currentColor;letter-spacing:-0.217px">30 días</div>
<div class=t style="left:1636.60px;top:1138.00px;color:#141414;font-weight:400;font-size:26.09px;line-height:1;font-kerning:none;letter-spacing:0.324px">Apr 13, 2026 08:42</div>
<div class=t style="left:1932.00px;top:1138.00px;color:#141414;font-weight:400;font-size:26.09px;line-height:1;font-kerning:none;letter-spacing:0.324px">May 13, 2026</div>
<div class=t style="left:2654.67px;top:1138.00px;color:#141414;font-weight:400;font-size:26.09px;line-height:1;font-kerning:none;letter-spacing:0.324px">Apr 13, 26 08:46:08</div>
<div class=t style="left:782.30px;top:1204.00px;color:#141414;font-weight:400;font-size:26.09px;line-height:1;font-kerning:none;letter-spacing:0.078px">USD 85,000</div>
<div class=t style="left:971.82px;top:1204.00px;color:#141414;font-weight:400;font-size:26.09px;line-height:1;font-kerning:none;letter-spacing:0.078px">USD 114,897</div>
<div class=t style="left:1201.06px;top:1204.00px;color:#141414;font-weight:400;font-size:26.09px;line-height:1;font-kerning:none;letter-spacing:0.078px">30</div>
<div class=t style="left:1348.10px;top:1204.00px;color:#141414;font-weight:400;font-size:26.09px;line-height:1;font-kerning:none;letter-spacing:0.078px">1</div>
<div class=t style="left:1480.65px;top:1204.00px;color:#2a13b8;font-weight:400;font-size:26.09px;line-height:1;font-kerning:none;-webkit-text-stroke:0.6px currentColor;letter-spacing:-0.217px">30 días</div>
<div class=t style="left:1636.60px;top:1204.00px;color:#141414;font-weight:400;font-size:26.09px;line-height:1;font-kerning:none;letter-spacing:0.324px">Apr 13, 2026 08:29</div>
<div class=t style="left:1932.00px;top:1204.00px;color:#141414;font-weight:400;font-size:26.09px;line-height:1;font-kerning:none;letter-spacing:0.324px">May 13, 2026</div>
<div class=t style="left:2654.67px;top:1204.00px;color:#141414;font-weight:400;font-size:26.09px;line-height:1;font-kerning:none;letter-spacing:0.324px">Apr 13, 26 08:30:19</div>
</body></html>
